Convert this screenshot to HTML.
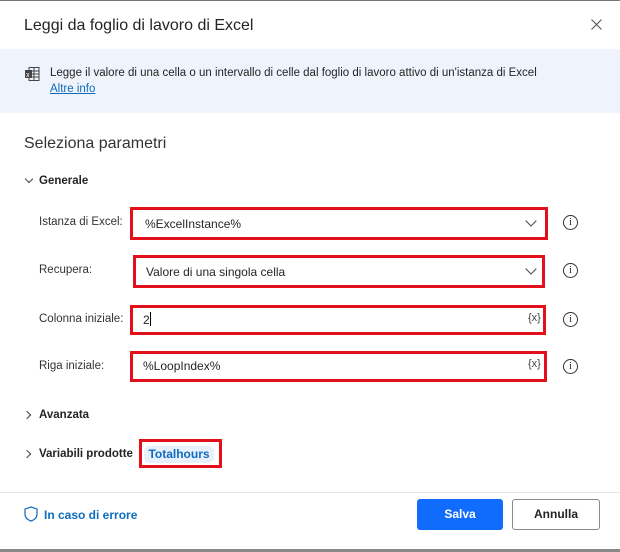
<!DOCTYPE html>
<html><head><meta charset="utf-8"><style>
*{margin:0;padding:0;box-sizing:border-box}
body{width:620px;height:552px;background:#fff;font-family:"Liberation Sans",sans-serif;color:#242424;position:relative;overflow:hidden}
.a{position:absolute}
.lbl{font-size:11.5px;color:#333}
.box{position:absolute;border:3px solid #e3101c;background:#fff}
.txt{position:absolute;font-size:12px;color:#242424}
.info{position:absolute;width:15px;height:15px;border:1px solid #333;border-radius:50%;font-size:10px;text-align:center;line-height:13px;font-family:"Liberation Serif",serif}
.chev{position:absolute;width:8px;height:8px;border-right:1.3px solid #444;border-bottom:1.3px solid #444;transform:rotate(45deg)}
.fx{position:absolute;font-size:11px;color:#444}
</style></head><body>
<div class="a" style="left:0;top:0;width:620px;height:1px;background:#777"></div>
<div class="a" style="left:0;top:549px;width:620px;height:3px;background:#888"></div>
<div class="a" style="left:24px;top:17px;font-size:16px;color:#242424">Leggi da foglio di lavoro di Excel</div>
<svg class="a" style="left:591px;top:19px" width="11" height="11" viewBox="0 0 11 11"><path d="M0.5 0.5 L10.5 10.5 M10.5 0.5 L0.5 10.5" stroke="#555" stroke-width="1.1"/></svg>
<div class="a" style="left:0;top:49px;width:620px;height:64px;background:#eff4fc"></div>
<svg class="a" style="left:25px;top:67px" width="15" height="14" viewBox="0 0 15 14"><rect x="4" y="0.5" width="10" height="13" fill="none" stroke="#444"/><line x1="4" y1="4" x2="14" y2="4" stroke="#444"/><line x1="4" y1="7" x2="14" y2="7" stroke="#444"/><line x1="4" y1="10" x2="14" y2="10" stroke="#444"/><line x1="9" y1="0.5" x2="9" y2="13.5" stroke="#444"/><rect x="0" y="3" width="7" height="8" fill="#444"/><text x="1" y="10" font-size="7" fill="#fff" font-family="Liberation Sans">x</text></svg>
<div class="a" style="left:50px;top:67px;font-size:11.5px;color:#242424">Legge il valore di una cella o un intervallo di celle dal foglio di lavoro attivo di un'istanza di Excel</div>
<div class="a" style="left:50px;top:83px;font-size:11.5px;color:#0f6cbd;text-decoration:underline">Altre info</div>
<div class="a" style="left:24px;top:135px;font-size:16px;color:#333">Seleziona parametri</div>
<div class="chev" style="left:26px;top:176px;width:6px;height:6px"></div>
<div class="a" style="left:39px;top:175px;font-size:11.5px;font-weight:bold;color:#242424">Generale</div>

<div class="a lbl" style="left:39px;top:216px">Istanza di Excel:</div>
<div class="box" style="left:130px;top:207px;width:418px;height:33px"></div>
<div class="txt" style="left:145px;top:217px">%ExcelInstance%</div>
<div class="chev" style="left:527px;top:217px"></div>
<div class="info" style="left:563px;top:215px">i</div>

<div class="a lbl" style="left:39px;top:264px">Recupera:</div>
<div class="box" style="left:133px;top:255px;width:412px;height:33px"></div>
<div class="txt" style="left:146px;top:265px">Valore di una singola cella</div>
<div class="chev" style="left:527px;top:265px"></div>
<div class="info" style="left:563px;top:263px">i</div>

<div class="a lbl" style="left:39px;top:313px">Colonna iniziale:</div>
<div class="box" style="left:130px;top:305px;width:416px;height:30px"></div>
<div class="txt" style="left:143px;top:312px">2<span style="display:inline-block;width:1px;height:14px;background:#000;vertical-align:-2px"></span></div>
<div class="fx" style="left:528px;top:312px">{x}</div>
<div class="info" style="left:563px;top:312px">i</div>

<div class="a lbl" style="left:39px;top:360px">Riga iniziale:</div>
<div class="box" style="left:130px;top:351px;width:417px;height:31px"></div>
<div class="txt" style="left:143px;top:359px">%LoopIndex%</div>
<div class="fx" style="left:528px;top:358px">{x}</div>
<div class="info" style="left:563px;top:359px">i</div>

<div class="chev" style="left:24px;top:412px;width:6px;height:6px;transform:rotate(-45deg)"></div>
<div class="a" style="left:39px;top:409px;font-size:11.5px;font-weight:bold;color:#242424">Avanzata</div>
<div class="chev" style="left:24px;top:451px;width:6px;height:6px;transform:rotate(-45deg)"></div>
<div class="a" style="left:39px;top:448px;font-size:11.5px;font-weight:bold;color:#242424">Variabili prodotte</div>
<div class="box" style="left:139px;top:439px;width:83px;height:29px;background:transparent"></div>
<div class="a" style="left:144px;top:446px;width:70px;height:17px;background:#e8f0fb;border-radius:5px;font-size:12px;font-weight:bold;color:#0f6cbd;text-align:center;line-height:17px">Totalhours</div>

<div class="a" style="left:0;top:492px;width:620px;height:1px;background:#e6e6e6"></div>
<svg class="a" style="left:24px;top:506px" width="14" height="16" viewBox="0 0 14 16"><path d="M7 1 L13 3 V8 C13 12 10 14 7 15 C4 14 1 12 1 8 V3 Z" fill="none" stroke="#0f6cbd" stroke-width="1.2"/></svg>
<div class="a" style="left:44px;top:508px;font-size:12px;font-weight:bold;color:#0f6cbd">In caso di errore</div>
<div class="a" style="left:417px;top:499px;width:86px;height:31px;background:#0f6cfd;border-radius:3px;color:#fff;font-size:12px;font-weight:bold;text-align:center;line-height:31px">Salva</div>
<div class="a" style="left:512px;top:499px;width:88px;height:31px;border:1px solid #8a8a8a;border-radius:3px;color:#242424;font-size:12px;font-weight:bold;text-align:center;line-height:29px">Annulla</div>
</body></html>
